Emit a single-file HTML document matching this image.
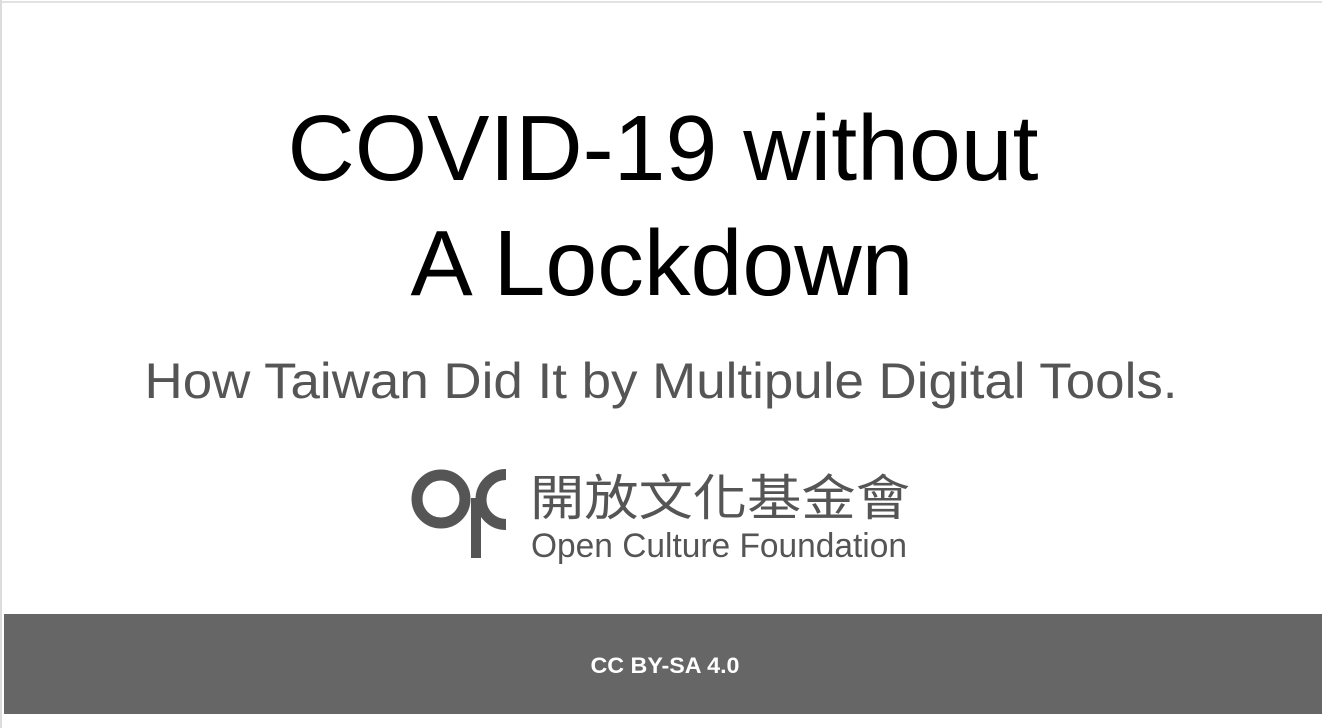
<!DOCTYPE html>
<html><head><meta charset="utf-8"><style>
html,body{margin:0;padding:0;background:#fff;width:1322px;height:728px;overflow:hidden}
</style></head><body>
<svg width="1322" height="728" viewBox="0 0 1322 728" xmlns="http://www.w3.org/2000/svg">
<rect x="0" y="0" width="1322" height="728" fill="#fff"/>
<rect x="0" y="1" width="1322" height="2" fill="#e2e2e2"/>
<rect x="0" y="0" width="2" height="728" fill="#dcdcdc"/>
<g font-family="Liberation Sans, sans-serif" text-anchor="middle">
<text x="663" y="180" font-size="93" fill="#000" textLength="751" lengthAdjust="spacingAndGlyphs">COVID-19 without</text>
<text x="662" y="295" font-size="93" fill="#000" textLength="503" lengthAdjust="spacingAndGlyphs">A Lockdown</text>
<text x="661" y="398" font-size="50" fill="#555" textLength="1033" lengthAdjust="spacingAndGlyphs">How Taiwan Did It by Multipule Digital Tools.</text>
</g>
<g fill="none" stroke="#555" stroke-width="11">
<circle cx="441" cy="499" r="24"/>
<path d="M506 474.5 A25 25 0 0 0 506 524.5"/>
</g>
<rect x="471" y="498" width="10" height="60" fill="#555"/>
<text x="530" y="515" font-family="Liberation Sans, Noto Sans CJK TC, sans-serif" font-size="49" fill="#555" textLength="380" lengthAdjust="spacingAndGlyphs">開放文化基金會</text>
<text x="531" y="557" font-family="Liberation Sans, sans-serif" font-size="34" fill="#555" textLength="376" lengthAdjust="spacingAndGlyphs">Open Culture Foundation</text>
<rect x="4" y="614" width="1318" height="100" fill="#666"/>
<text x="665" y="673" font-family="Liberation Sans, sans-serif" font-weight="bold" font-size="22" fill="#fff" text-anchor="middle" textLength="149" lengthAdjust="spacingAndGlyphs">CC BY-SA 4.0</text>
</svg>
</body></html>
